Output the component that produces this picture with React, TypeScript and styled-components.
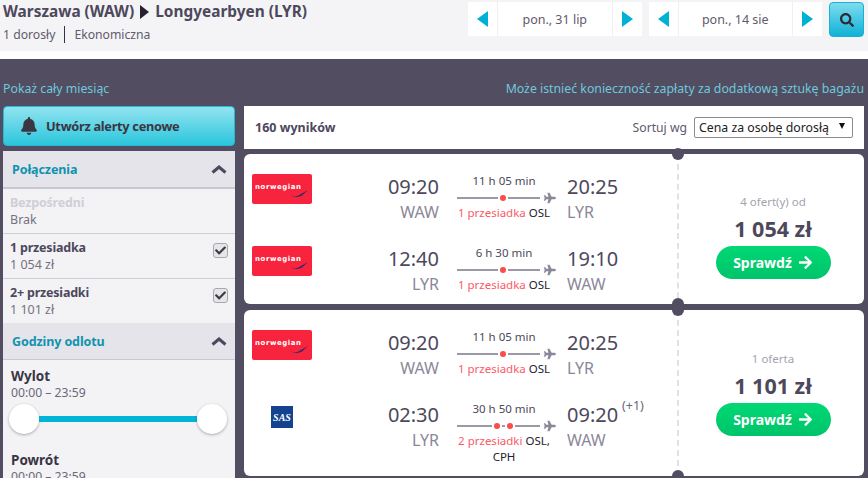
import styled, { createGlobalStyle } from 'styled-components';
import { FaBell, FaSearch, FaCheck, FaArrowRight, FaPlane } from 'react-icons/fa';

const Global = createGlobalStyle`
   * { box-sizing: border-box; }
   html, body { margin: 0; padding: 0; background: #fff; }
   body { width: 868px; height: 478px; overflow: hidden; font-family: "Noto Sans", "Open Sans", sans-serif; color: #4d485c; }
`;

const Header = styled.header`
   height: 51px;
   background: #f4f4f6;
   display: flex;
   justify-content: space-between;
   padding: 2px 4px 0 3px;
`;

const Route = styled.div`
   display: flex;
   align-items: center;
   gap: 6px;
   font-size: 15.4px;
   font-weight: 700;
   line-height: 20px;
   color: #4d485c;
`;

const Meta = styled.div`
   display: flex;
   align-items: center;
   margin-top: 4px;
   font-size: 12.2px;
   line-height: 17px;
   color: #5f5a6c;
`;

const MetaItem = styled.span`
   & + & {
      margin-left: 9px;
      padding-left: 9px;
      border-left: 1px solid #35313f;
   }
`;

const Search = styled.div`
   display: flex;
   gap: 7px;
   align-items: flex-start;
`;

const DateBox = styled.div`
   display: flex;
   gap: 1px;
   height: 34px;
   background: #f0f0f3;
`;

const ArrowCell = styled.div`
   width: 29px;
   display: flex;
   align-items: center;
   justify-content: center;
   background: #fff;
`;

const DateLabel = styled.div`
   width: 113.5px;
   display: flex;
   align-items: center;
   justify-content: center;
   background: #fff;
   font-size: 12.5px;
   color: #5f5a6c;
`;

const SearchButton = styled.button`
   width: 35px;
   height: 35px;
   padding: 0;
   border: 1px solid #19b1d3;
   border-radius: 4px;
   background: linear-gradient(#7edcee, #0fb2d6);
   color: #2c2a35;
   display: flex;
   align-items: center;
   justify-content: center;
`;

const Main = styled.main`
   margin-top: 8px;
   height: 419px;
   background: #524d60;
   padding: 0 4px 0 3px;
   overflow: hidden;
`;

const Links = styled.div`
   height: 47px;
   padding-top: 21px;
   display: flex;
   justify-content: space-between;
   font-size: 12.3px;
   line-height: 18px;
   color: #6ec8de;
`;

const Columns = styled.div`
   display: grid;
   grid-template-columns: 232px 620px;
   gap: 9px;
`;

const Sidebar = styled.aside`
   display: flex;
   flex-direction: column;
   gap: 5px;
`;

const AlertButton = styled.button`
   height: 40px;
   padding: 0 0 0 16px;
   border: 1px solid #26b9d5;
   border-radius: 4px;
   background: linear-gradient(#92e3ef, #2bc6dc);
   display: flex;
   align-items: center;
   gap: 8px;
   font: 700 12.8px "Noto Sans", sans-serif;
   letter-spacing: -0.3px;
   color: #3a3644;
`;

const Panel = styled.div`
   background: #f3f3f6;
   border-radius: 4px 4px 0 0;
`;

const PanelHead = styled.div<{ $thin?: boolean }>`
   height: ${props => (props.$thin ? 37 : 38)}px;
   padding: 0 8px 0 9px;
   display: flex;
   align-items: center;
   justify-content: space-between;
   background: #e5e4ea;
   border-bottom: ${props => (props.$thin ? 1 : 2)}px solid #c9c7d1;
   font-size: 12.5px;
   font-weight: 700;
   letter-spacing: -0.1px;
   color: #0f93ae;
`;

const FilterRow = styled.div<{ $last?: boolean }>`
   height: ${props => (props.$last ? 44 : 45)}px;
   padding: 5px 7px 0;
   display: flex;
   justify-content: space-between;
   border-bottom: ${props => (props.$last ? '0' : '1px solid #cfcdd6')};
`;

const FilterName = styled.div<{ $off?: boolean }>`
   font-size: 12.5px;
   font-weight: 700;
   letter-spacing: -0.2px;
   line-height: 18px;
   color: ${props => (props.$off ? '#d0ced8' : '#4d485c')};
`;

const FilterValue = styled.div`
   font-size: 12.5px;
   line-height: 16px;
   color: #76717f;
`;

const Check = styled.div`
   width: 15px;
   height: 15px;
   margin-top: 4px;
   border: 1px solid #a9a7b0;
   border-radius: 3px;
   background: #e6e6e9;
   display: flex;
   align-items: center;
   justify-content: center;
   color: #3e3b45;
`;

const TimeFilter = styled.div`
   padding: 8px 8px 0;
`;

const TimeName = styled.div`
   font-size: 13.5px;
   font-weight: 700;
   line-height: 17px;
   color: #3a3644;
`;

const TimeRange = styled.div`
   font-size: 12.2px;
   line-height: 16px;
   color: #6c6779;
`;

const Slider = styled.div`
   margin: 3px 0 18px -2px;
   height: 30px;
   display: flex;
   align-items: center;
`;

const Thumb = styled.div`
   width: 30px;
   height: 30px;
   flex: none;
   border-radius: 50%;
   background: #fff;
   box-shadow: 0 1px 3px rgba(60, 55, 75, 0.4);
`;

const Track = styled.div`
   flex: 1;
   height: 6px;
   background: #00b4d8;
`;

const Results = styled.section`
   display: flex;
   flex-direction: column;
`;

const ResultBar = styled.div`
   height: 43px;
   margin-bottom: 5px;
   padding: 0 11px;
   display: flex;
   align-items: center;
   justify-content: space-between;
   background: #fff;
`;

const Count = styled.div`
   font-size: 12.5px;
   font-weight: 700;
   color: #4d485c;
`;

const Sort = styled.div`
   display: flex;
   align-items: center;
   gap: 7px;
   font-size: 12.2px;
   color: #5f5a6c;
`;

const Select = styled.div`
   width: 159px;
   height: 21px;
   padding: 0 7px 0 4px;
   display: flex;
   align-items: center;
   justify-content: space-between;
   border: 1px solid #8b8b8b;
   border-radius: 2px;
   font-size: 12.3px;
   color: #222;
`;

const Caret = styled.span`
   width: 0;
   height: 0;
   margin-top: -4px;
   border: 3.5px solid transparent;
   border-top: 6px solid #111;
   border-bottom: 0;
`;

const Card = styled.article<{ $height: number }>`
   position: relative;
   height: ${props => props.$height}px;
   margin-bottom: 6px;
   display: grid;
   grid-template-columns: 435px 185px;
   background: #fff;
   border-radius: 6px;
`;

const Flights = styled.div`
   padding: 20px 0 0 8px;
   border-right: 2px dashed #e1e0e6;
`;

const Flight = styled.div`
   height: 72px;
   display: grid;
   grid-template-columns: 60px 127px 117px 1fr;
   align-items: start;
`;

const Notch = styled.span<{ $bottom?: boolean }>`
   position: absolute;
   left: 428px;
   ${props => (props.$bottom ? 'bottom: -6px;' : 'top: -6px;')}
   width: 12px;
   height: 12px;
   border-radius: 50%;
   background: #524d60;
`;

const LogoBox = styled.div`
   height: 30px;
   display: flex;
   align-items: center;
   justify-content: center;
`;

const Norwegian = styled.div`
   position: relative;
   width: 60px;
   height: 30px;
   padding: 9px 0 0 3px;
   border-radius: 2px;
   background: #f8233c;
   font: 700 7px/9px "DejaVu Sans", sans-serif;
   letter-spacing: 0.55px;
   color: #fff;
`;

const Swoosh = styled.svg`
   position: absolute;
   right: 4px;
   bottom: 7px;
`;

const Sas = styled.div`
   width: 22px;
   height: 22px;
   display: flex;
   align-items: center;
   justify-content: center;
   background: #13428f;
   font: italic 700 10px "Liberation Serif", serif;
   color: #fff;
`;

const Stop = styled.div<{ $side: 'from' | 'to' }>`
   display: flex;
   flex-direction: column;
   align-items: ${props => (props.$side === 'from' ? 'flex-end' : 'flex-start')};
   margin: -1px 0 0 ${props => (props.$side === 'from' ? 0 : 11)}px;
`;

const Clock = styled.div`
   position: relative;
   font-size: 20px;
   line-height: 28px;
   color: #4d485c;
`;

const Plus = styled.sup`
   position: absolute;
   left: 55px;
   top: -3px;
   font-size: 12.5px;
   line-height: 16px;
   color: #6c6779;
`;

const Airport = styled.div`
   font-size: 16px;
   line-height: 22px;
   color: #8a8799;
`;

const Path = styled.div`
   margin-left: 18px;
   width: 99px;
   font-size: 11.5px;
   text-align: center;
   color: #25222c;
`;

const Duration = styled.div`
   width: 94px;
   margin-top: -1px;
   line-height: 16px;
   color: #4d485c;
`;

const Line = styled.div`
   height: 12px;
   margin-top: 3px;
   display: flex;
   align-items: center;
   gap: 2px;
   color: #8a8799;
`;

const Segment = styled.span<{ $width?: number }>`
   height: 2px;
   flex: ${props => (props.$width ? `0 0 ${props.$width}px` : '1')};
   background: #9b99a5;
`;

const Dot = styled.span`
   width: 6px;
   height: 6px;
   flex: none;
   border-radius: 50%;
   background: #fb4c4c;
`;

const Plane = styled(FaPlane)`
   flex: none;
   margin-left: 2px;
`;

const Stops = styled.div`
   width: 94px;
   margin-top: 1px;
   line-height: 16px;
`;

const StopCount = styled.span`
   color: #fb5a68;
`;

const Via = styled.div`
   width: 94px;
   line-height: 16px;
`;

const Offer = styled.div`
   display: flex;
   flex-direction: column;
   align-items: center;
   justify-content: center;
   padding-left: 3px;
`;

const OfferCount = styled.div`
   font-size: 11.5px;
   line-height: 16px;
   color: #a5a2ae;
`;

const Price = styled.div`
   margin-top: 6px;
   font-size: 21.5px;
   font-weight: 700;
   line-height: 26px;
   color: #4d485c;
`;

const CheckButton = styled.button`
   width: 115px;
   height: 33px;
   margin-top: 4px;
   padding: 0;
   border: 0;
   border-radius: 17px;
   background: linear-gradient(#00d874, #00c46a);
   display: flex;
   align-items: center;
   justify-content: center;
   gap: 6px;
   font: 700 14px "Noto Sans", sans-serif;
   color: #fff;
`;

const Triangle = ({ dir, size = 'md', color = '#00b1d6' }: { dir: 'left' | 'right'; size?: 'md' | 'sm'; color?: string }) => {
   const w = size === 'md' ? 11 : 9;
   const h = size === 'md' ? 16 : 14;
   const points = dir === 'left' ? `${w},0 ${w},${h} 0,${h / 2}` : `0,0 0,${h} ${w},${h / 2}`;
   return (
      <svg width={w} height={h} viewBox={`0 0 ${w} ${h}`}>
         <polygon points={points} fill={color} />
      </svg>
   );
};

const Chevron = () => (
   <svg width='16' height='9' viewBox='0 0 16 9'>
      <path d='M1.5 7.5 L8 2 L14.5 7.5' fill='none' stroke='#4d485c' strokeWidth='3' />
   </svg>
);

const NorwegianLogo = () => (
   <Norwegian>
      norwegian
      <Swoosh width='18' height='7' viewBox='0 0 18 7'>
         <path d='M0 3.5 C2 7.5 7 7 11 4 L18 0 L12 5.5 C7 8 2 7.5 0 3.5 Z' fill='#27306b' />
      </Swoosh>
   </Norwegian>
);

interface Leg {
   logo: 'norwegian' | 'sas';
   from: string;
   to: string;
   depart: string;
   arrive: string;
   duration: string;
   stops: string;
   via: string;
   viaNext?: string;
   dots: number;
   nextDay?: boolean;
}

const offers: { height: number; count: string; price: string; legs: Leg[] }[] = [
   {
      height: 150,
      count: '4 ofert(y) od',
      price: '1 054 zł',
      legs: [
         { logo: 'norwegian', from: 'WAW', to: 'LYR', depart: '09:20', arrive: '20:25', duration: '11 h 05 min', stops: '1 przesiadka', via: 'OSL', dots: 1 },
         { logo: 'norwegian', from: 'LYR', to: 'WAW', depart: '12:40', arrive: '19:10', duration: '6 h 30 min', stops: '1 przesiadka', via: 'OSL', dots: 1 },
      ],
   },
   {
      height: 166,
      count: '1 oferta',
      price: '1 101 zł',
      legs: [
         { logo: 'norwegian', from: 'WAW', to: 'LYR', depart: '09:20', arrive: '20:25', duration: '11 h 05 min', stops: '1 przesiadka', via: 'OSL', dots: 1 },
         { logo: 'sas', from: 'LYR', to: 'WAW', depart: '02:30', arrive: '09:20', duration: '30 h 50 min', stops: '2 przesiadki', via: 'OSL,', viaNext: 'CPH', dots: 2, nextDay: true },
      ],
   },
];

const FlightRow = ({ leg }: { leg: Leg }) => (
   <Flight>
      <LogoBox>{leg.logo === 'norwegian' ? <NorwegianLogo /> : <Sas>SAS</Sas>}</LogoBox>
      <Stop $side='from'>
         <Clock>{leg.depart}</Clock>
         <Airport>{leg.from}</Airport>
      </Stop>
      <Path>
         <Duration>{leg.duration}</Duration>
         <Line>
            {leg.dots === 1 ? (
               <>
                  <Segment />
                  <Dot />
                  <Segment $width={32} />
               </>
            ) : (
               <>
                  <Segment />
                  <Dot />
                  <Segment $width={3} />
                  <Dot />
                  <Segment $width={25} />
               </>
            )}
            <Plane size={12} />
         </Line>
         <Stops>
            <StopCount>{leg.stops}</StopCount> {leg.via}
         </Stops>
         {leg.viaNext && <Via>{leg.viaNext}</Via>}
      </Path>
      <Stop $side='to'>
         <Clock>
            {leg.arrive}
            {leg.nextDay && <Plus>(+1)</Plus>}
         </Clock>
         <Airport>{leg.to}</Airport>
      </Stop>
   </Flight>
);

const App = () => (
   <>
      <Global />
      <Header>
         <div>
            <Route>
               Warszawa (WAW)
               <Triangle dir='right' size='sm' color='#25222c' />
               Longyearbyen (LYR)
            </Route>
            <Meta>
               <MetaItem>1 dorosły</MetaItem>
               <MetaItem>Ekonomiczna</MetaItem>
            </Meta>
         </div>
         <Search>
            <DateBox>
               <ArrowCell><Triangle dir='left' /></ArrowCell>
               <DateLabel>pon., 31 lip</DateLabel>
               <ArrowCell><Triangle dir='right' /></ArrowCell>
            </DateBox>
            <DateBox>
               <ArrowCell><Triangle dir='left' /></ArrowCell>
               <DateLabel>pon., 14 sie</DateLabel>
               <ArrowCell><Triangle dir='right' /></ArrowCell>
            </DateBox>
            <SearchButton><FaSearch size={14} /></SearchButton>
         </Search>
      </Header>
      <Main>
         <Links>
            <span>Pokaż cały miesiąc</span>
            <span>Może istnieć konieczność zapłaty za dodatkową sztukę bagażu</span>
         </Links>
         <Columns>
            <Sidebar>
               <AlertButton>
                  <FaBell size={18} />
                  Utwórz alerty cenowe
               </AlertButton>
               <Panel>
                  <PanelHead>
                     Połączenia
                     <Chevron />
                  </PanelHead>
                  <FilterRow>
                     <div>
                        <FilterName $off>Bezpośredni</FilterName>
                        <FilterValue>Brak</FilterValue>
                     </div>
                  </FilterRow>
                  <FilterRow>
                     <div>
                        <FilterName>1 przesiadka</FilterName>
                        <FilterValue>1 054 zł</FilterValue>
                     </div>
                     <Check><FaCheck size={11} /></Check>
                  </FilterRow>
                  <FilterRow $last>
                     <div>
                        <FilterName>2+ przesiadki</FilterName>
                        <FilterValue>1 101 zł</FilterValue>
                     </div>
                     <Check><FaCheck size={11} /></Check>
                  </FilterRow>
                  <PanelHead $thin>
                     Godziny odlotu
                     <Chevron />
                  </PanelHead>
                  <TimeFilter>
                     <TimeName>Wylot</TimeName>
                     <TimeRange>00:00 – 23:59</TimeRange>
                     <Slider>
                        <Thumb />
                        <Track />
                        <Thumb />
                     </Slider>
                     <TimeName>Powrót</TimeName>
                     <TimeRange>00:00 – 23:59</TimeRange>
                  </TimeFilter>
               </Panel>
            </Sidebar>
            <Results>
               <ResultBar>
                  <Count>160 wyników</Count>
                  <Sort>
                     Sortuj wg
                     <Select>
                        Cena za osobę dorosłą
                        <Caret />
                     </Select>
                  </Sort>
               </ResultBar>
               {offers.map(offer => (
                  <Card key={offer.price} $height={offer.height}>
                     <Notch />
                     <Flights>
                        {offer.legs.map(leg => (
                           <FlightRow key={leg.depart} leg={leg} />
                        ))}
                     </Flights>
                     <Offer>
                        <OfferCount>{offer.count}</OfferCount>
                        <Price>{offer.price}</Price>
                        <CheckButton>
                           Sprawdź
                           <FaArrowRight size={15} />
                        </CheckButton>
                     </Offer>
                     <Notch $bottom />
                  </Card>
               ))}
            </Results>
         </Columns>
      </Main>
   </>
);

export default App;
